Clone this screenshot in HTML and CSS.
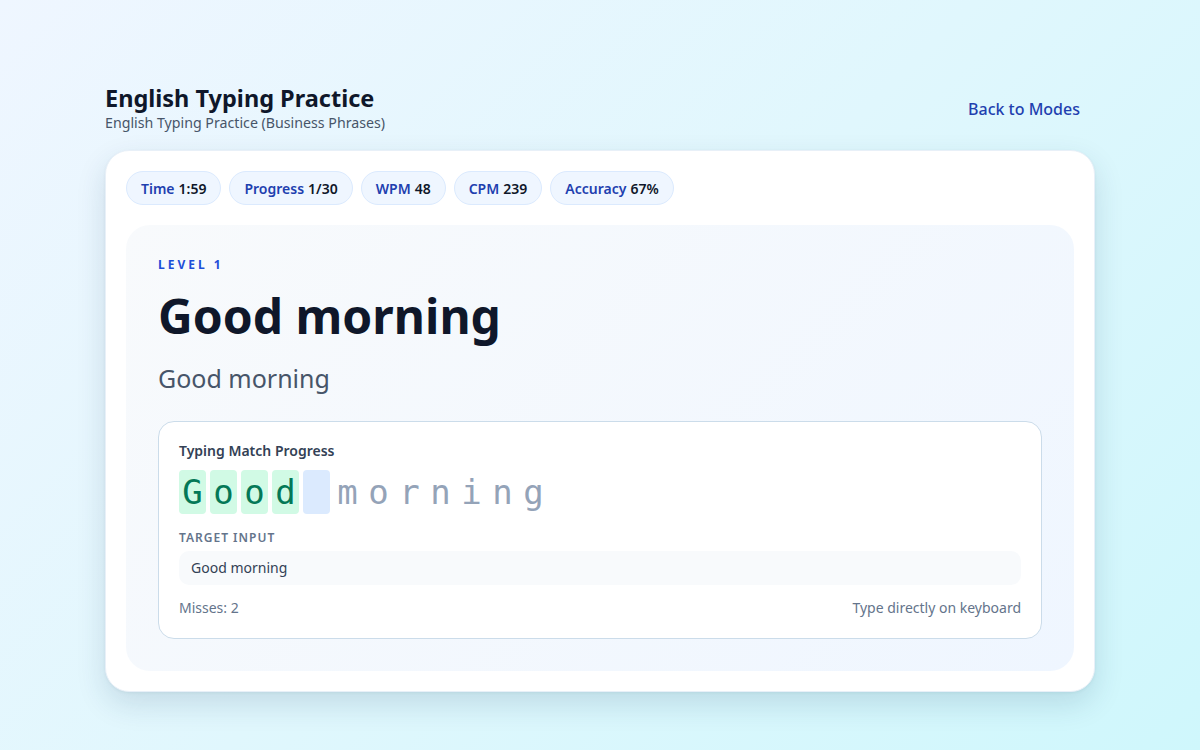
FILE: index.html
```html
<!DOCTYPE html>
<html lang="en">
<head>
<meta charset="utf-8">
<title>English Typing Practice</title>
<link rel="stylesheet" href="styles.css">
</head>
<body>
<div class="page">
  <header class="header">
    <div class="titles">
      <h1 class="title">English Typing Practice</h1>
      <p class="subtitle">English Typing Practice (Business Phrases)</p>
    </div>
    <a class="back" href="#">Back to Modes</a>
  </header>
  <main class="card">
    <div class="stats">
      <span class="pill"><span class="pill-label">Time</span> <span class="pill-value">1:59</span></span>
      <span class="pill"><span class="pill-label">Progress</span> <span class="pill-value">1/30</span></span>
      <span class="pill"><span class="pill-label">WPM</span> <span class="pill-value">48</span></span>
      <span class="pill"><span class="pill-label">CPM</span> <span class="pill-value">239</span></span>
      <span class="pill"><span class="pill-label">Accuracy</span> <span class="pill-value">67%</span></span>
    </div>
    <section class="panel">
      <div class="level">LEVEL 1</div>
      <h2 class="phrase">Good morning</h2>
      <p class="translation">Good morning</p>
      <div class="box">
        <div class="box-title">Typing Match Progress</div>
        <div class="chars">
          <span class="ch ok">G</span><span class="ch ok">o</span><span class="ch ok">o</span><span class="ch ok">d</span><span class="ch cur"> </span><span class="ch">m</span><span class="ch">o</span><span class="ch">r</span><span class="ch">n</span><span class="ch">i</span><span class="ch">n</span><span class="ch">g</span>
        </div>
        <div class="target-label">TARGET INPUT</div>
        <div class="target">Good morning</div>
        <div class="foot">
          <span>Misses: 2</span>
          <span>Type directly on keyboard</span>
        </div>
      </div>
    </section>
  </main>
</div>
</body>
</html>
```
FILE: styles.css
```css
* { box-sizing: border-box; }
html, body { margin: 0; height: 100%; }
body {
  font-family: "Noto Sans", "Open Sans", sans-serif;
  background: linear-gradient(135deg, #eff6ff 0%, #e0f7fd 50%, #cff7fc 100%);
  color: #0f172a;
  min-height: 750px;
}
.page {
  width: 990px;
  margin: 0 auto;
  padding-top: 84px;
}
.header {
  display: flex;
  justify-content: space-between;
  align-items: center;
  padding-right: 15px;
}
.title {
  margin: 0;
  font-size: 23.5px;
  line-height: 28px;
  font-weight: 700;
  color: #0f172a;
}
.subtitle {
  margin: 0;
  font-size: 14.2px;
  line-height: 22px;
  color: #475569;
}
.back {
  font-size: 16px;
  color: #1e40af;
  text-decoration: none;
  font-weight: 500;
}
.card {
  margin-top: 16px;
  background: #fff;
  border-radius: 24px;
  padding: 20px;
  box-shadow: 0 12px 30px rgba(15, 60, 90, 0.14), 0 1px 3px rgba(15, 60, 90, 0.06);
  border: 1px solid #e8f0f8;
}
.stats {
  display: flex;
  gap: 8px;
}
.pill {
  display: inline-flex;
  align-items: center;
  gap: 4px;
  height: 34px;
  padding: 0 14px;
  border-radius: 999px;
  background: #eff6ff;
  border: 1px solid #dbeafe;
  font-size: 14px;
  font-weight: 600;
}
.pill-label { color: #1e40af; }
.pill-value { color: #0f172a; }
.panel {
  margin-top: 20px;
  border-radius: 24px;
  background: linear-gradient(135deg, #f8fafc 0%, #eff6ff 100%);
  padding: 32px;
}
.level {
  font-size: 12px;
  font-weight: 700;
  letter-spacing: 3px;
  color: #1d4ed8;
  line-height: 16px;
}
.phrase {
  margin: 13px 0 0;
  font-size: 48px;
  line-height: 60px;
  font-weight: 700;
  color: #0f172a;
}
.translation {
  margin: 14px 0 0;
  font-size: 25px;
  line-height: 36px;
  color: #475569;
}
.box {
  margin-top: 25px;
  background: #fff;
  border: 1px solid #cbdcea;
  border-radius: 16px;
  padding: 19px 20px 20px;
}
.box-title {
  font-size: 14px;
  font-weight: 600;
  color: #334155;
  line-height: 20px;
}
.chars {
  display: flex;
  gap: 4px;
  margin-top: 9px;
}
.ch {
  width: 27px;
  height: 44px;
  display: inline-flex;
  align-items: center;
  justify-content: center;
  border-radius: 4px;
  font-family: "DejaVu Sans Mono", monospace;
  font-size: 34px;
  color: #94a3b8;
  white-space: pre;
}
.ch.ok { background: #d1fae5; color: #047857; }
.ch.cur { background: #dbeafe; }
.target-label {
  margin-top: 16px;
  font-size: 12px;
  font-weight: 600;
  letter-spacing: 1px;
  color: #64748b;
  line-height: 16px;
}
.target {
  margin-top: 5px;
  height: 34px;
  border-radius: 10px;
  background: #f8fafc;
  padding: 0 12px 2px;
  display: flex;
  align-items: center;
  font-size: 14px;
  color: #334155;
}
.foot {
  margin-top: 13px;
  display: flex;
  justify-content: space-between;
  font-size: 14px;
  line-height: 20px;
  color: #64748b;
}
```
